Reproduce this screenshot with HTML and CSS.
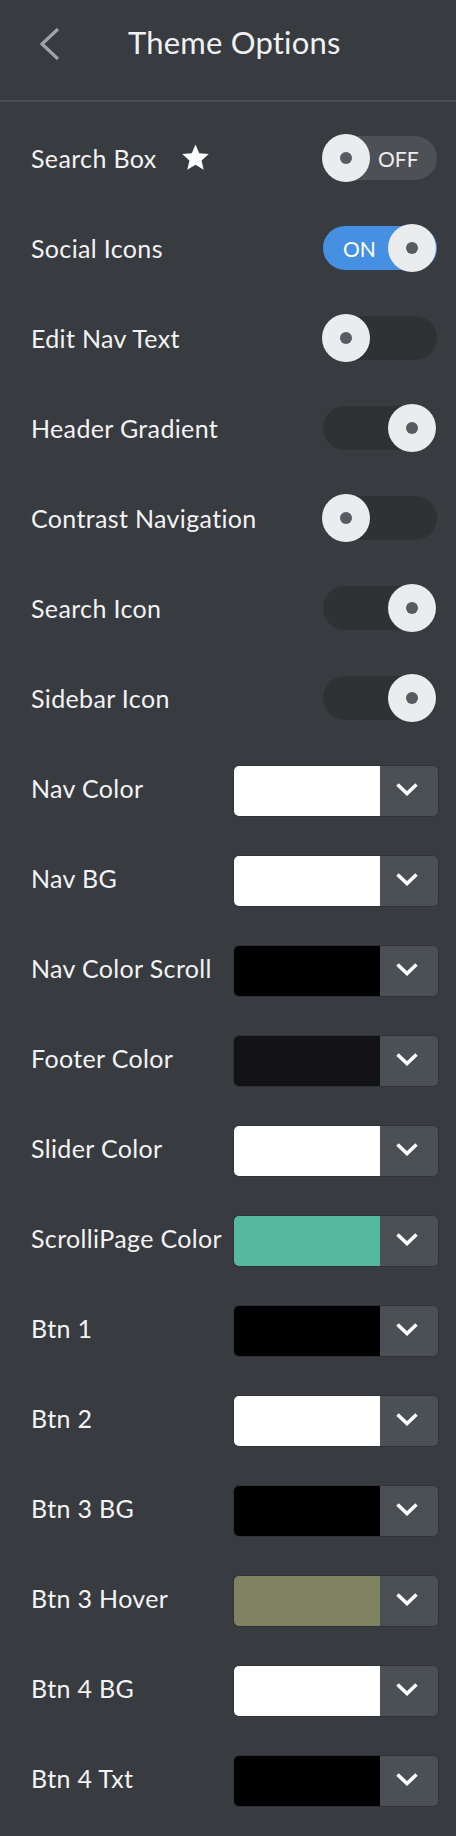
FILE: index.html
```html
<!DOCTYPE html>
<html>
<head>
<meta charset="utf-8">
<link rel="stylesheet" href="styles.css">
</head>
<body>
<div class="panel">
  <header class="header">
    <svg class="back" width="22" height="34" viewBox="0 0 22 34"><polyline points="19,2 3,17 19,32" fill="none" stroke="#9fa2a6" stroke-width="3.2"/></svg>
    <h1 class="title">Theme Options</h1>
  </header>
  <div class="list">
    <div class="row"><span class="label">Search Box</span><svg class="star" width="29" height="29" viewBox="0 0 24 24"><path d="M12 1.2l3.1 7.3 7.9.7-6 5.2 1.8 7.7L12 18l-6.8 4.1 1.8-7.7-6-5.2 7.9-.7z" fill="#fff"/></svg><div class="toggle off labeled"><span class="knob"></span><span class="tlabel">OFF</span></div></div>
    <div class="row"><span class="label">Social Icons</span><div class="toggle on"><span class="tlabel">ON</span><span class="knob"></span></div></div>
    <div class="row"><span class="label">Edit Nav Text</span><div class="toggle off"><span class="knob"></span></div></div>
    <div class="row"><span class="label">Header Gradient</span><div class="toggle dark-on"><span class="knob"></span></div></div>
    <div class="row"><span class="label">Contrast Navigation</span><div class="toggle off"><span class="knob"></span></div></div>
    <div class="row"><span class="label">Search Icon</span><div class="toggle dark-on"><span class="knob"></span></div></div>
    <div class="row"><span class="label">Sidebar Icon</span><div class="toggle dark-on"><span class="knob"></span></div></div>

    <div class="row color"><span class="label">Nav Color</span><div class="picker"><span class="swatch" style="background:#ffffff"></span><span class="drop"><svg width="24" height="15" viewBox="0 0 24 15"><polyline points="2.5,2.5 12,11.5 21.5,2.5" fill="none" stroke="#fff" stroke-width="3.6"/></svg></span></div></div>
    <div class="row color"><span class="label">Nav BG</span><div class="picker"><span class="swatch" style="background:#ffffff"></span><span class="drop"><svg width="24" height="15" viewBox="0 0 24 15"><polyline points="2.5,2.5 12,11.5 21.5,2.5" fill="none" stroke="#fff" stroke-width="3.6"/></svg></span></div></div>
    <div class="row color"><span class="label">Nav Color Scroll</span><div class="picker"><span class="swatch" style="background:#000000"></span><span class="drop"><svg width="24" height="15" viewBox="0 0 24 15"><polyline points="2.5,2.5 12,11.5 21.5,2.5" fill="none" stroke="#fff" stroke-width="3.6"/></svg></span></div></div>
    <div class="row color"><span class="label">Footer Color</span><div class="picker"><span class="swatch" style="background:#131316"></span><span class="drop"><svg width="24" height="15" viewBox="0 0 24 15"><polyline points="2.5,2.5 12,11.5 21.5,2.5" fill="none" stroke="#fff" stroke-width="3.6"/></svg></span></div></div>
    <div class="row color"><span class="label">Slider Color</span><div class="picker"><span class="swatch" style="background:#ffffff"></span><span class="drop"><svg width="24" height="15" viewBox="0 0 24 15"><polyline points="2.5,2.5 12,11.5 21.5,2.5" fill="none" stroke="#fff" stroke-width="3.6"/></svg></span></div></div>
    <div class="row color"><span class="label">ScrolliPage Color</span><div class="picker"><span class="swatch" style="background:#55b99e"></span><span class="drop"><svg width="24" height="15" viewBox="0 0 24 15"><polyline points="2.5,2.5 12,11.5 21.5,2.5" fill="none" stroke="#fff" stroke-width="3.6"/></svg></span></div></div>
    <div class="row color"><span class="label">Btn 1</span><div class="picker"><span class="swatch" style="background:#000000"></span><span class="drop"><svg width="24" height="15" viewBox="0 0 24 15"><polyline points="2.5,2.5 12,11.5 21.5,2.5" fill="none" stroke="#fff" stroke-width="3.6"/></svg></span></div></div>
    <div class="row color"><span class="label">Btn 2</span><div class="picker"><span class="swatch" style="background:#ffffff"></span><span class="drop"><svg width="24" height="15" viewBox="0 0 24 15"><polyline points="2.5,2.5 12,11.5 21.5,2.5" fill="none" stroke="#fff" stroke-width="3.6"/></svg></span></div></div>
    <div class="row color"><span class="label">Btn 3 BG</span><div class="picker"><span class="swatch" style="background:#000000"></span><span class="drop"><svg width="24" height="15" viewBox="0 0 24 15"><polyline points="2.5,2.5 12,11.5 21.5,2.5" fill="none" stroke="#fff" stroke-width="3.6"/></svg></span></div></div>
    <div class="row color"><span class="label">Btn 3 Hover</span><div class="picker"><span class="swatch" style="background:#7f8362"></span><span class="drop"><svg width="24" height="15" viewBox="0 0 24 15"><polyline points="2.5,2.5 12,11.5 21.5,2.5" fill="none" stroke="#fff" stroke-width="3.6"/></svg></span></div></div>
    <div class="row color"><span class="label">Btn 4 BG</span><div class="picker"><span class="swatch" style="background:#ffffff"></span><span class="drop"><svg width="24" height="15" viewBox="0 0 24 15"><polyline points="2.5,2.5 12,11.5 21.5,2.5" fill="none" stroke="#fff" stroke-width="3.6"/></svg></span></div></div>
    <div class="row color"><span class="label">Btn 4 Txt</span><div class="picker"><span class="swatch" style="background:#000000"></span><span class="drop"><svg width="24" height="15" viewBox="0 0 24 15"><polyline points="2.5,2.5 12,11.5 21.5,2.5" fill="none" stroke="#fff" stroke-width="3.6"/></svg></span></div></div>
  </div>
</div>
</body>
</html>
```

FILE: styles.css
```css
html, body {
  margin: 0;
  padding: 0;
  background: #383b3f;
}
body {
  width: 456px;
  height: 1836px;
  overflow: hidden;
  font-family: Lato, "Open Sans", sans-serif;
  color: #f2f2f2;
}
.panel {
  display: flex;
  flex-direction: column;
}
.header {
  height: 100px;
  border-bottom: 2px solid #4a4e52;
  display: flex;
  align-items: center;
  box-sizing: content-box;
}
.back {
  margin-left: 39px;
  margin-top: -12px;
  flex: none;
}
.title {
  margin: -16px 0 0 67px;
  font-size: 31px;
  font-weight: 400;
  color: #f0f1f2;
  letter-spacing: 0.2px;
}
.list {
  display: flex;
  flex-direction: column;
  padding-top: 11px;
}
.row {
  height: 90px;
  display: flex;
  align-items: center;
  padding: 0 18px 0 31px;
}
.label {
  font-size: 25px;
  letter-spacing: 0.35px;
  color: #f3f3f3;
  flex: none;
}
.star {
  margin-left: 24px;
  margin-top: -2px;
  flex: none;
}
.toggle {
  margin-left: auto;
  width: 114px;
  height: 44px;
  border-radius: 22px;
  background: #303133;
  display: flex;
  align-items: center;
  position: relative;
  box-sizing: border-box;
  margin-right: 1px;
}
.toggle.labeled { background: #4d5054; }
.toggle.on { background: #4590e2; }
.knob {
  width: 48px;
  height: 48px;
  border-radius: 50%;
  background: #ebecee;
  display: flex;
  align-items: center;
  justify-content: center;
  flex: none;
}
.knob::after {
  content: "";
  width: 12px;
  height: 12px;
  border-radius: 50%;
  background: #575c62;
}
.toggle.off .knob { margin-left: -1px; }
.toggle.on .knob,
.toggle.dark-on .knob { margin-left: auto; margin-right: 1px; }
.tlabel {
  font-size: 21px;
  color: #eeeeee;
}
.toggle.labeled .tlabel { margin-left: 8px; }
.toggle.on .tlabel { margin-left: 20px; color: #ffffff; }
.row.color .picker { margin-top: 6px; }
.picker {
  margin-left: auto;
  width: 204px;
  height: 50px;
  border-radius: 5px;
  overflow: hidden;
  display: flex;
  box-shadow: 0 0 0 1px rgba(0,0,0,0.12);
}
.swatch {
  width: 146px;
  flex: none;
}
.drop {
  flex: 1;
  background: #4b5055;
  display: flex;
  align-items: center;
  justify-content: center;
  padding-right: 5px;
  padding-bottom: 3px;
}
.drop svg { display: block; }
```
